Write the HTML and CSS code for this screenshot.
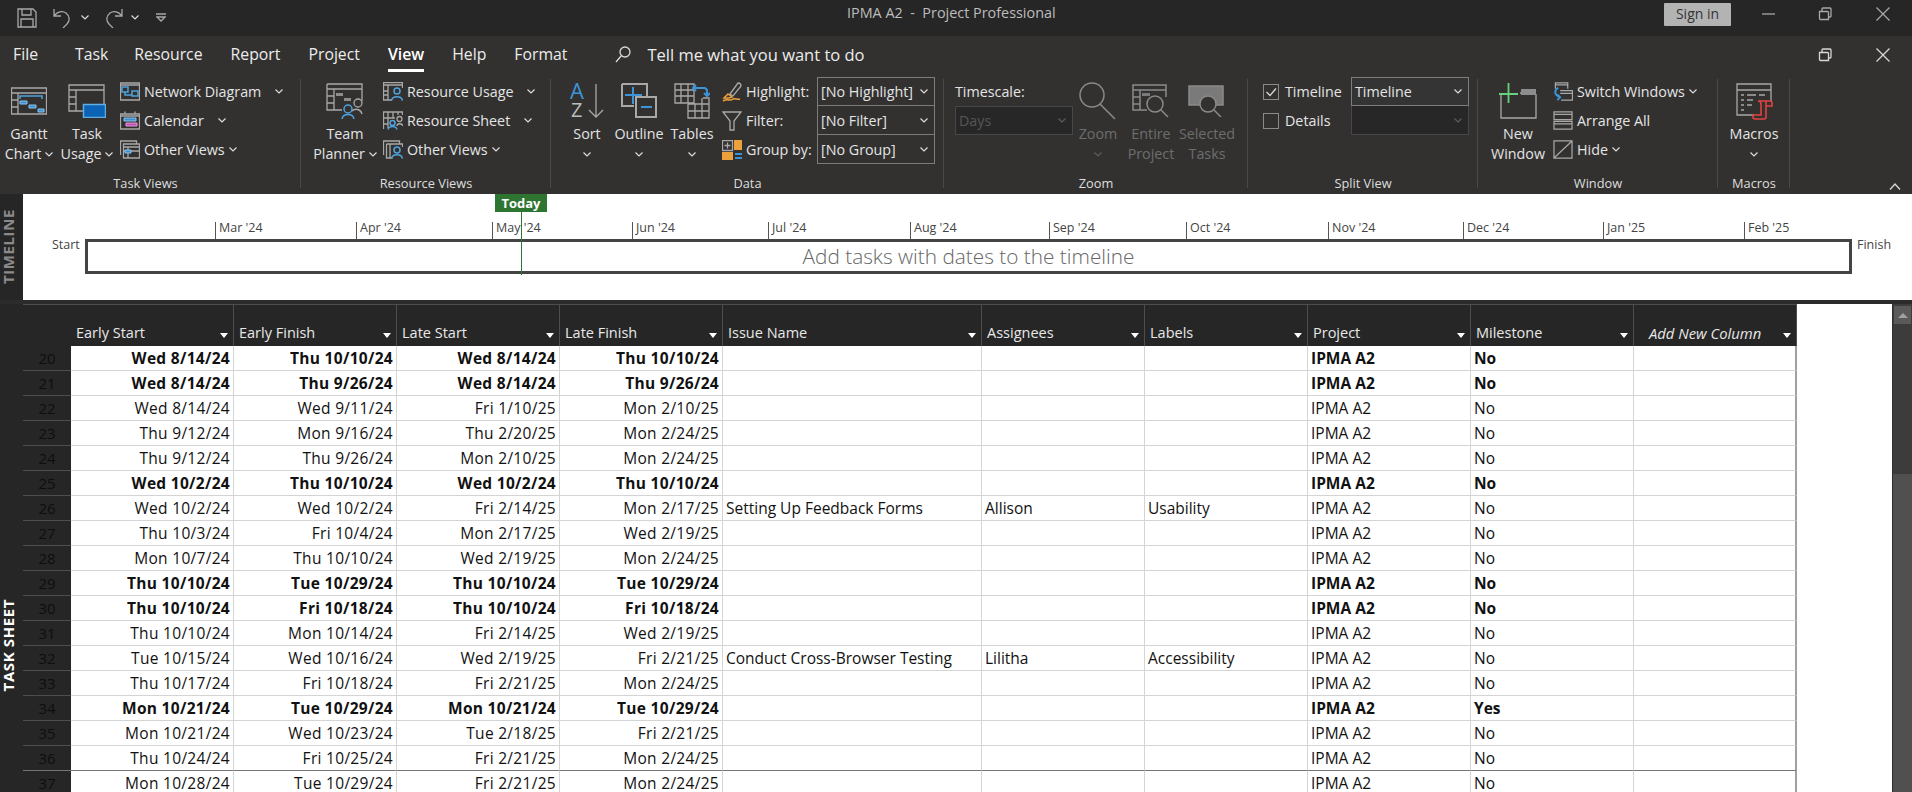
FILE: index.html
```html
<!DOCTYPE html>
<html lang="en">
<head>
<meta charset="utf-8">
<title>IPMA A2 - Project Professional</title>
<link rel="stylesheet" href="styles.css">
</head>
<body>
<div class="app">
  <header class="titlebar">
    <div class="qat">
      <svg class="qi" viewBox="0 0 20 20"><path class="g" d="M1 1h15l3 3v15H1zM5 1v6h9V1M4 19v-8h12v8"/></svg>
      <svg class="qi undo" viewBox="0 0 20 20"><path class="g" d="M1 1v7h7M1 8c3-4 8-6 12-3 4 3 4 8 1 11l-4 4"/></svg>
      <svg class="chev" viewBox="0 0 8 5"><path d="M.5.5 4 4 7.5.5"/></svg>
      <svg class="qi redo" viewBox="0 0 20 20"><path class="g" d="M19 1v7h-7M19 8c-3-4-8-6-12-3-4 3-4 8-1 11l4 4"/></svg>
      <svg class="chev" viewBox="0 0 8 5"><path d="M.5.5 4 4 7.5.5"/></svg>
      <svg class="qc" viewBox="0 0 10 9"><path class="g" d="M0 1h10M1 4l4 4 4-4z"/></svg>
    </div>
    <div class="title">IPMA A2&nbsp; -&nbsp; Project Professional</div>
    <div class="winctl">
      <span class="signin">Sign in</span>
      <svg class="wi wmin" viewBox="0 0 14 14"><path class="g" d="M0 7h13"/></svg>
      <svg class="wi" viewBox="0 0 14 14"><path class="g" d="M1.500 4.500h8a1 1 0 0 1 1 1v7h-8a1 1 0 0 1-1-1zM4 4V2a1 1 0 0 1 1-1h7a1 1 0 0 1 1 1v7a1 1 0 0 1-1 1h-1"/></svg>
      <svg class="wi" viewBox="0 0 14 14"><path class="g" d="M.5.5l13 13M13.500.5l-13 13"/></svg>
    </div>
  </header>

  <nav class="tabs">
    <span class="tab tab-file">File</span>
    <span class="tab tab-task">Task</span>
    <span class="tab">Resource</span>
    <span class="tab">Report</span>
    <span class="tab">Project</span>
    <span class="tab tab-on">View</span>
    <span class="tab">Help</span>
    <span class="tab">Format</span>
    <svg class="search" viewBox="0 0 16 17"><path class="g lt" d="M15 6a5 5 0 1 1-10 0 5 5 0 0 1 10 0zM6.500 9.500 1 16"/></svg>
    <span class="tell">Tell me what you want to do</span>
    <svg class="wi win2" viewBox="0 0 14 14"><path class="g lt" d="M1.500 4.500h8a1 1 0 0 1 1 1v7h-8a1 1 0 0 1-1-1zM4 4V2a1 1 0 0 1 1-1h7a1 1 0 0 1 1 1v7a1 1 0 0 1-1 1h-1"/></svg>
    <svg class="wi win3" viewBox="0 0 14 14"><path class="g lt" d="M.5.5l13 13M13.500.5l-13 13"/></svg>
  </nav>

  <section class="ribbon">
    <div class="group tg1">
      <div class="body">
        <div class="lg w58">
          <div class="ic"><svg width="36" height="28" viewBox="0 0 36 28"><path class="g" d="M.5 1h35v26H.5zM.5 6h35M7 6v21M.5 13h6.500M.5 20h6.500"/><path class="bl" d="M9 12V9h22v3"/><path class="bf" d="M9 14h7v3H9zM18 18h7v3h-7zM27 22h6v3h-6z"/></svg></div>
          <span>Gantt</span><span>Chart<svg class="chev ml4" viewBox="0 0 8 5"><path d="M.5.5 4 4 7.5.5"/></svg></span>
        </div>
        <div class="lg w58">
          <div class="ic"><svg width="38" height="34" viewBox="0 0 38 34"><path class="g" d="M1 1h35v26H1zM1 6h35M8 6v21M1 13h7M1 20h7"/><path class="blue-box" d="M15.500 20.500h22v13h-22z"/></svg></div>
          <span>Task</span><span>Usage<svg class="chev ml4" viewBox="0 0 8 5"><path d="M.5.5 4 4 7.5.5"/></svg></span>
        </div>
        <div class="col ml4">
          <div class="sm"><svg class="si" viewBox="0 0 20 19"><path class="g" d="M.5 1h19v17H.5zM.5 3h19"/><path class="bl" d="M2 5h6v5H2zM12 9h6v5h-6zM5 10v3h7"/></svg><span>Network Diagram</span><svg class="chev ml13" viewBox="0 0 8 5"><path d="M.5.5 4 4 7.500.5"/></svg></div>
          <div class="sm"><svg class="si" viewBox="0 0 20 19"><path class="g" d="M.5 3h19v15H.5zM5 .5v3M15 .5v3M.5 5h19"/><path class="bf" d="M4 7h12v3H4z"/><path class="pk" d="M6 12h11v3H6z"/></svg><span>Calendar</span><svg class="chev ml13" viewBox="0 0 8 5"><path d="M.5.5 4 4 7.500.5"/></svg></div>
          <div class="sm"><svg class="si" viewBox="0 0 20 19"><path class="g" d="M3.500 4h16v14h-16zM3.500 7h16M8 7v11M.5 15V1h16v3M3.500 11h4M8 11h11"/><path class="bf" d="M5 10h6v3H5z"/></svg><span>Other Views</span><svg class="chev ml4" viewBox="0 0 8 5"><path d="M.5.5 4 4 7.500.5"/></svg></div>
        </div>
      </div>
      <div class="label">Task Views</div>
    </div>

    <div class="group tg2">
      <div class="body">
        <div class="lg w70">
          <div class="ic"><svg width="38" height="36" viewBox="0 0 38 36"><path class="g" d="M1 1h35v17M1 1v26h15M1 6h35M8 6v21M1 13h7M1 20h7"/><path class="gf" d="M10 10h7v3h-7zM18 15h7v3h-7z"/><circle class="g" cx="32" cy="20" r="4"/><path class="g" d="M36 31c-1-5-7-6-10-3"/><circle class="bl" cx="22" cy="26" r="4"/><path class="bl" d="M16 36c1-6 11-6 12 0"/></svg></div>
          <span>Team</span><span>Planner<svg class="chev ml4" viewBox="0 0 8 5"><path d="M.5.5 4 4 7.500.5"/></svg></span>
        </div>
        <div class="col ml3">
          <div class="sm"><svg class="si" viewBox="0 0 20 19"><path class="g" d="M9 18H.5V.5h19V6M.5 3h19M5 3v15M.5 9H5M.5 13H5"/><circle class="bl" cx="14" cy="9" r="3"/><path class="bl" d="M8.500 18.500c1-5 10-5 11 0"/></svg><span>Resource Usage</span><svg class="chev ml13" viewBox="0 0 8 5"><path d="M.5.5 4 4 7.500.5"/></svg></div>
          <div class="sm"><svg class="si" viewBox="0 0 20 19"><path class="g" d="M.5 18V1h19v3M.5 7H12M.5 13H5M5 1v16M10 1v6M15 1v3"/><circle class="g" cx="16.500" cy="8" r="2.500"/><path class="g" d="M14 15c0-3 5-3 6 0"/><circle class="bl" cx="9.500" cy="12" r="2.500"/><path class="bl" d="M5 18.500c1-4 8-4 9 0"/></svg><span>Resource Sheet</span><svg class="chev ml13" viewBox="0 0 8 5"><path d="M.5.5 4 4 7.500.5"/></svg></div>
          <div class="sm"><svg class="si" viewBox="0 0 20 19"><path class="g" d="M3.500 4h16v3M3.500 4v14h6M.5 15V1h16v3M7 4v14"/><circle class="bl" cx="14" cy="10" r="3"/><path class="bl" d="M8.500 18.500c1-5 10-5 11 0"/></svg><span>Other Views</span><svg class="chev ml4" viewBox="0 0 8 5"><path d="M.5.5 4 4 7.500.5"/></svg></div>
        </div>
      </div>
      <div class="label">Resource Views</div>
    </div>

    <div class="group tg3">
      <div class="body">
        <div class="lg w44">
          <div class="ic"><svg width="34" height="36" viewBox="0 0 34 36"><text class="az a" x="0" y="16">A</text><text class="az z" x="1" y="34">Z</text><path class="g" d="M26 1v33M19 27l7 7 7-7"/></svg></div>
          <span>Sort</span><span><svg class="chev" viewBox="0 0 8 5"><path d="M.5.5 4 4 7.500.5"/></svg></span>
        </div>
        <div class="lg w60">
          <div class="ic"><svg width="36" height="36" viewBox="0 0 36 36"><path class="thick" d="M1 1h25v12M1 1v22h12"/><path class="bl2" d="M12 4v17M4 12h17"/><path class="thick" d="M15 14h20v20H15z"/><path class="bl2" d="M20 24h11"/></svg></div>
          <span>Outline</span><span><svg class="chev" viewBox="0 0 8 5"><path d="M.5.5 4 4 7.500.5"/></svg></span>
        </div>
        <div class="lg w46">
          <div class="ic"><svg width="36" height="36" viewBox="0 0 36 36"><path class="g" d="M1 1h19v19H1zM1 7h19M1 13h19M7 1v19M14 1v19M14 21v14h21V15h-6M14 28h21M21 21v14M28 15v20M14 21h21"/><path class="bl2" d="M19 5h12l2 2v6M30 10l3 3 3-3M22 2l-3 3 3 3"/></svg></div>
          <span>Tables</span><span><svg class="chev" viewBox="0 0 8 5"><path d="M.5.5 4 4 7.500.5"/></svg></span>
        </div>
        <div class="col ml7">
          <div class="frow"><span class="fl"><svg class="fi" viewBox="0 0 20 20"><path class="g" d="M8 12 16 1c2 0 3 1 3 3l-8 10z"/><path class="or" d="M6 12l4 3-3 1H2zM1 19c5-3 7 1 10-2 2-1 5 1 7 0"/></svg>Highlight:</span><div class="dd"><span>[No Highlight]</span><svg class="chev" viewBox="0 0 8 5"><path d="M.5.5 4 4 7.500.5"/></svg></div></div>
          <div class="frow"><span class="fl"><svg class="fi" viewBox="0 0 20 20"><path class="g" d="M1 1h18l-7 9v9H8v-9z"/></svg>Filter:</span><div class="dd"><span>[No Filter]</span><svg class="chev" viewBox="0 0 8 5"><path d="M.5.5 4 4 7.500.5"/></svg></div></div>
          <div class="frow"><span class="fl"><svg class="fi" viewBox="0 0 20 20"><path class="g" d="M.5.500h10v10H.5zM5.500 2.500v6M2.500 5.500h6"/><path class="orf" d="M12 0h8v10h-8zM0 12h11v8H0z"/><path class="bl2" d="M13 14h7M13 18h7"/></svg>Group by:</span><div class="dd"><span>[No Group]</span><svg class="chev" viewBox="0 0 8 5"><path d="M.5.5 4 4 7.500.5"/></svg></div></div>
        </div>
      </div>
      <div class="label">Data</div>
    </div>

    <div class="group tg4">
      <div class="body">
        <div class="col">
          <div class="frow"><span>Timescale:</span></div>
          <div class="dd dd-off"><span>Days</span><svg class="chev off" viewBox="0 0 8 5"><path d="M.5.5 4 4 7.500.5"/></svg></div>
        </div>
        <div class="lg w50 dis">
          <div class="ic"><svg width="38" height="38" viewBox="0 0 38 38"><path class="d" d="M25 13a12 12 0 1 1-24 0 12 12 0 0 1 24 0zM21 22l15 15"/></svg></div>
          <span>Zoom</span><span><svg class="chev off" viewBox="0 0 8 5"><path d="M.5.5 4 4 7.500.5"/></svg></span>
        </div>
        <div class="lg w56 dis">
          <div class="ic"><svg width="38" height="34" viewBox="0 0 38 34"><path class="d" d="M15 26H1V1h33v12M1 6h33M8 6v20M1 13h7M1 20h7"/><path class="df" d="M10 9h8v3h-8z"/><path class="d" d="M31 20a8 8 0 1 1-16 0 8 8 0 0 1 16 0zM29 26l7 7"/></svg></div>
          <span>Entire</span><span>Project</span>
        </div>
        <div class="lg w56 dis">
          <div class="ic"><svg width="38" height="32" viewBox="0 0 38 32"><path class="df" d="M1 1h34v19H1z"/><path class="d" d="M1 1h34v19H1z"/><path class="dk" d="M28 19a8 8 0 1 1-16 0 8 8 0 0 1 16 0z"/><path class="d" d="M26 25l7 7"/></svg></div>
          <span>Selected</span><span>Tasks</span>
        </div>
      </div>
      <div class="label">Zoom</div>
    </div>

    <div class="group tg5">
      <div class="body">
        <div class="col">
          <div class="frow"><span class="cbl"><span class="cb"><svg viewBox="0 0 12 10"><path class="g lt" d="M1.500 5 5 8.500l6-7"/></svg></span>Timeline</span><div class="dd dd-on"><span>Timeline</span><svg class="chev" viewBox="0 0 8 5"><path d="M.5.5 4 4 7.500.5"/></svg></div></div>
          <div class="frow"><span class="cbl"><span class="cb"></span>Details</span><div class="dd dd-off"><span></span><svg class="chev off" viewBox="0 0 8 5"><path d="M.5.5 4 4 7.500.5"/></svg></div></div>
        </div>
      </div>
      <div class="label">Split View</div>
    </div>

    <div class="group tg6">
      <div class="body">
        <div class="lg w64">
          <div class="ic"><svg width="38" height="36" viewBox="0 0 38 36"><path class="g" d="M2 11v24h35V11M21 10h16"/><path class="gf" d="M22 6h15v6H22z"/><path class="gr" d="M0 11h19M9.500 0v20"/></svg></div>
          <span>New</span><span>Window</span>
        </div>
        <div class="col ml3">
          <div class="sm"><svg class="si" viewBox="0 0 20 20"><path class="g" d="M2 7V1h13v6M2 3h13M7 9h13v10H8M7 12h13"/><path class="bl2" d="M5 6c-5 3-4 8 2 10M4 13l3 3-3 3"/></svg><span>Switch Windows</span><svg class="chev ml4" viewBox="0 0 8 5"><path d="M.5.5 4 4 7.500.5"/></svg></div>
          <div class="sm"><svg class="si" viewBox="0 0 20 20"><path class="g" d="M.5 1h19v8H.5zM.5 11h19v8H.5zM.5 3.500h19M.5 13.500h19"/></svg><span>Arrange All</span></div>
          <div class="sm"><svg class="si" viewBox="0 0 20 20"><path class="g" d="M.5 1h19v18H.5zM.5 19l19-18"/></svg><span>Hide</span><svg class="chev ml4" viewBox="0 0 8 5"><path d="M.5.5 4 4 7.500.5"/></svg></div>
        </div>
      </div>
      <div class="label">Window</div>
    </div>

    <div class="group tg7">
      <div class="body">
        <div class="lg w72">
          <div class="ic"><svg width="37" height="37" viewBox="0 0 37 37"><path class="g" d="M18 32H1V1h34v17M1 7h34"/><path class="g" d="M5 12h3M11 12h9M23 12h6M5 17h3M11 17h6M5 22h3M11 22h5M5 27h3"/><path class="rd" d="M22 18h12a2 2 0 0 1 2 2v3h-6M22 18c2 0 3 1 3 3v11h-8v2a2 2 0 0 0 2 2h9a2 2 0 0 0 2-2V18"/></svg></div>
          <span>Macros</span><span><svg class="chev" viewBox="0 0 8 5"><path d="M.5.5 4 4 7.500.5"/></svg></span>
        </div>
      </div>
      <div class="label">Macros</div>
    </div>
    <svg class="collapse" viewBox="0 0 12 7"><path class="g lt" d="M1 6.500 6 1l5 5.500"/></svg>
  </section>

  <section class="timeline">
    <div class="side side-tl"><span class="vlabel dim">TIMELINE</span></div>
    <div class="canvas">
      <span class="today">Today</span>
      <span class="today-line"></span>
      <span class="edge edge-s">Start</span>
      <span class="edge edge-f">Finish</span>
      <div class="tlbar">Add tasks with dates to the timeline</div>
      <span class="mon" style="left:192px">Mar '24</span>
      <span class="mon" style="left:333px">Apr '24</span>
      <span class="mon" style="left:469px">May '24</span>
      <span class="mon" style="left:609px">Jun '24</span>
      <span class="mon" style="left:745px">Jul '24</span>
      <span class="mon" style="left:887px">Aug '24</span>
      <span class="mon" style="left:1026px">Sep '24</span>
      <span class="mon" style="left:1163px">Oct '24</span>
      <span class="mon" style="left:1305px">Nov '24</span>
      <span class="mon" style="left:1440px">Dec '24</span>
      <span class="mon" style="left:1580px">Jan '25</span>
      <span class="mon" style="left:1721px">Feb '25</span>
    </div>
  </section>

  <section class="sheet">
    <div class="side side-ts"><span class="vlabel">TASK SHEET</span></div>
    <table class="grid">
      <colgroup><col class="c-n"><col class="c-d"><col class="c-d"><col class="c-d"><col class="c-d"><col class="c-i"><col class="c-d"><col class="c-d"><col class="c-d"><col class="c-d"><col class="c-d"></colgroup>
      <thead>
        <tr>
          <th class="n"></th>
          <th><div class="hd">Early Start<i></i></div></th>
          <th><div class="hd">Early Finish<i></i></div></th>
          <th><div class="hd">Late Start<i></i></div></th>
          <th><div class="hd">Late Finish<i></i></div></th>
          <th><div class="hd">Issue Name<i></i></div></th>
          <th><div class="hd">Assignees<i></i></div></th>
          <th><div class="hd">Labels<i></i></div></th>
          <th><div class="hd">Project<i></i></div></th>
          <th><div class="hd">Milestone<i></i></div></th>
          <th><div class="hd hd-new"><em>Add New Column</em><i></i></div></th>
        </tr>
      </thead>
      <tbody>
        <tr class="b"><td class="n">20</td><td class="r">Wed 8/14/24</td><td class="r">Thu 10/10/24</td><td class="r">Wed 8/14/24</td><td class="r">Thu 10/10/24</td><td></td><td></td><td></td><td>IPMA A2</td><td>No</td><td></td></tr>
        <tr class="b"><td class="n">21</td><td class="r">Wed 8/14/24</td><td class="r">Thu 9/26/24</td><td class="r">Wed 8/14/24</td><td class="r">Thu 9/26/24</td><td></td><td></td><td></td><td>IPMA A2</td><td>No</td><td></td></tr>
        <tr><td class="n">22</td><td class="r">Wed 8/14/24</td><td class="r">Wed 9/11/24</td><td class="r">Fri 1/10/25</td><td class="r">Mon 2/10/25</td><td></td><td></td><td></td><td>IPMA A2</td><td>No</td><td></td></tr>
        <tr><td class="n">23</td><td class="r">Thu 9/12/24</td><td class="r">Mon 9/16/24</td><td class="r">Thu 2/20/25</td><td class="r">Mon 2/24/25</td><td></td><td></td><td></td><td>IPMA A2</td><td>No</td><td></td></tr>
        <tr><td class="n">24</td><td class="r">Thu 9/12/24</td><td class="r">Thu 9/26/24</td><td class="r">Mon 2/10/25</td><td class="r">Mon 2/24/25</td><td></td><td></td><td></td><td>IPMA A2</td><td>No</td><td></td></tr>
        <tr class="b"><td class="n">25</td><td class="r">Wed 10/2/24</td><td class="r">Thu 10/10/24</td><td class="r">Wed 10/2/24</td><td class="r">Thu 10/10/24</td><td></td><td></td><td></td><td>IPMA A2</td><td>No</td><td></td></tr>
        <tr><td class="n">26</td><td class="r">Wed 10/2/24</td><td class="r">Wed 10/2/24</td><td class="r">Fri 2/14/25</td><td class="r">Mon 2/17/25</td><td>Setting Up Feedback Forms</td><td>Allison</td><td>Usability</td><td>IPMA A2</td><td>No</td><td></td></tr>
        <tr><td class="n">27</td><td class="r">Thu 10/3/24</td><td class="r">Fri 10/4/24</td><td class="r">Mon 2/17/25</td><td class="r">Wed 2/19/25</td><td></td><td></td><td></td><td>IPMA A2</td><td>No</td><td></td></tr>
        <tr><td class="n">28</td><td class="r">Mon 10/7/24</td><td class="r">Thu 10/10/24</td><td class="r">Wed 2/19/25</td><td class="r">Mon 2/24/25</td><td></td><td></td><td></td><td>IPMA A2</td><td>No</td><td></td></tr>
        <tr class="b"><td class="n">29</td><td class="r">Thu 10/10/24</td><td class="r">Tue 10/29/24</td><td class="r">Thu 10/10/24</td><td class="r">Tue 10/29/24</td><td></td><td></td><td></td><td>IPMA A2</td><td>No</td><td></td></tr>
        <tr class="b"><td class="n">30</td><td class="r">Thu 10/10/24</td><td class="r">Fri 10/18/24</td><td class="r">Thu 10/10/24</td><td class="r">Fri 10/18/24</td><td></td><td></td><td></td><td>IPMA A2</td><td>No</td><td></td></tr>
        <tr><td class="n">31</td><td class="r">Thu 10/10/24</td><td class="r">Mon 10/14/24</td><td class="r">Fri 2/14/25</td><td class="r">Wed 2/19/25</td><td></td><td></td><td></td><td>IPMA A2</td><td>No</td><td></td></tr>
        <tr><td class="n">32</td><td class="r">Tue 10/15/24</td><td class="r">Wed 10/16/24</td><td class="r">Wed 2/19/25</td><td class="r">Fri 2/21/25</td><td>Conduct Cross-Browser Testing</td><td>Lilitha</td><td>Accessibility</td><td>IPMA A2</td><td>No</td><td></td></tr>
        <tr><td class="n">33</td><td class="r">Thu 10/17/24</td><td class="r">Fri 10/18/24</td><td class="r">Fri 2/21/25</td><td class="r">Mon 2/24/25</td><td></td><td></td><td></td><td>IPMA A2</td><td>No</td><td></td></tr>
        <tr class="b"><td class="n">34</td><td class="r">Mon 10/21/24</td><td class="r">Tue 10/29/24</td><td class="r">Mon 10/21/24</td><td class="r">Tue 10/29/24</td><td></td><td></td><td></td><td>IPMA A2</td><td>Yes</td><td></td></tr>
        <tr><td class="n">35</td><td class="r">Mon 10/21/24</td><td class="r">Wed 10/23/24</td><td class="r">Tue 2/18/25</td><td class="r">Fri 2/21/25</td><td></td><td></td><td></td><td>IPMA A2</td><td>No</td><td></td></tr>
        <tr class="pb"><td class="n">36</td><td class="r">Thu 10/24/24</td><td class="r">Fri 10/25/24</td><td class="r">Fri 2/21/25</td><td class="r">Mon 2/24/25</td><td></td><td></td><td></td><td>IPMA A2</td><td>No</td><td></td></tr>
        <tr><td class="n">37</td><td class="r">Mon 10/28/24</td><td class="r">Tue 10/29/24</td><td class="r">Fri 2/21/25</td><td class="r">Mon 2/24/25</td><td></td><td></td><td></td><td>IPMA A2</td><td>No</td><td></td></tr>
      </tbody>
    </table>
    <div class="blank"></div>
    <div class="scroll"><div class="sb-up"><i></i></div><div class="sb-track"></div><div class="sb-thumb"></div></div>
  </section>
</div>
</body>
</html>
```

FILE: styles.css
```css
* { box-sizing: border-box; }
html, body { margin: 0; padding: 0; }
body { font-family: "Open Sans", "Noto Sans", sans-serif; background: #fff; }
.app { width: 1912px; height: 792px; overflow: hidden; display: flex; flex-direction: column; }
svg { display: block; flex: none; }
svg path, svg circle { fill: none; }
.g { stroke: #a8a8a8; stroke-width: 1.3; fill: none; }
.thick { stroke: #a8a8a8; stroke-width: 2; }
svg .lt { stroke: #d8d8d8; }
.bl { stroke: #4ea3dc; stroke-width: 1.5; }
.bl2 { stroke: #3d94d6; stroke-width: 2; }
svg path.bf { fill: #3f8fcf; stroke: #8cc6ee; stroke-width: 1; }
svg path.pk { fill: #c04fb0; stroke: #e59ad8; stroke-width: 1; }
svg path.gf { fill: #8d8d8d; stroke: none; }
svg path.blue-box { fill: #0b63b6; stroke: #62ace4; stroke-width: 1.5; }
.or { stroke: #eda13c; stroke-width: 1.5; }
svg path.orf { fill: #eda13c; stroke: none; }
.gr { stroke: #66d07a; stroke-width: 1.8; }
.rd { stroke: #e2433f; stroke-width: 1.6; }
.d { stroke: #8a8a8a; stroke-width: 1.5; }
svg path.df { fill: #7a7a7a; stroke: none; }
svg path.dk { fill: #323130; stroke: #8a8a8a; stroke-width: 1.5; }
.az { font-size: 22px; font-family: "Open Sans", sans-serif; }
.a { fill: #3d94d6; }
.z { fill: #bcbcbc; font-size: 20px; }

.titlebar { height: 36px; background: #262626; position: relative; display: flex; align-items: flex-start; color: #c2c2c2; flex: none; }
.qat { display: flex; align-items: center; padding: 5px 0 0 17px; height: 30px; }
.qi { width: 20px; height: 20px; }
.undo { margin-left: 16px; }
.redo { margin-left: 14px; }
.qc { width: 10px; height: 9px; margin-left: 17px; }
.chev { width: 8px; height: 5px; }
.chev path { stroke: #dcdcdc; stroke-width: 1.2; }
.qat .chev { margin-left: 8px; }
.chev.off path { stroke: #5c5c5c; }
.title { position: absolute; left: 847px; top: 3px; font-size: 14.4px; line-height: 20px; color: #bdbdbd; white-space: nowrap; }
.winctl { margin-left: auto; display: flex; align-items: flex-start; padding: 3px 0 0 0; height: 30px; }
.signin { width: 67px; height: 23px; background: #b3b3b3; color: #333; font-size: 14px; line-height: 22px; text-align: center; border-radius: 1px; margin-right: 31px; }
.wi { width: 14px; height: 14px; margin-top: 4px; margin-right: 44px; }
.winctl .wi:last-child { margin-right: 22px; }
.wmin { margin-right: 42px; }

.tabs { height: 38px; background: #323130; display: flex; align-items: flex-start; color: #ececec; font-size: 15.8px; flex: none; }
.tab { padding: 9px 14px 0; height: 36px; line-height: 19px; white-space: nowrap; position: relative; }
.tab-file { padding-left: 13px; padding-right: 23px; }
.tab-task { padding-right: 12px; }
.tab-on { font-weight: 600; color: #fff; }
.tab-on::after { content: ""; position: absolute; left: 14px; right: 14px; bottom: 0; height: 3px; background: #fff; }
.search { width: 16px; height: 17px; margin: 10px 0 0 33px; }
.tell { margin-left: 17px; padding-top: 9px; line-height: 19px; font-size: 16.5px; white-space: nowrap; }
.win2 { margin-left: auto; margin-top: 12px; margin-right: 44px; }
.win3 { margin-top: 12px; margin-right: 22px; }

.ribbon { height: 120px; background: #323130; display: flex; align-items: flex-start; color: #e4e4e4; font-size: 14.3px; flex: none; position: relative; }
.group { height: 109px; margin-top: 5px; border-right: 1px solid #4a4948; flex: none; }
.tg1 { width: 301px; }
.tg2 { width: 250px; padding-left: 9px; }
.tg3 { width: 393px; padding-left: 14px; }
.tg4 { width: 304px; padding-left: 11px; }
.tg5 { width: 230px; padding-left: 15px; }
.tg6 { width: 240px; padding-left: 8px; }
.tg7 { width: 72px; }
.body { height: 96px; margin-top: -2px; display: flex; align-items: flex-start; }
.label { height: 20px; line-height: 20px; font-size: 12.8px; text-align: center; color: #dedede; margin-right: -1px; }
.tg1 .label { padding-right: 10px; }
.tg2 .label { margin-left: -9px; }
.tg3 .label { margin-left: -14px; }
.tg4 .label { margin-left: -11px; }
.tg5 .label { margin-left: -15px; }
.tg6 .label { margin-left: -8px; }

.lg { margin-top: 1px; display: flex; flex-direction: column; align-items: center; line-height: 20px; white-space: nowrap; flex: none; }
.lg > span { display: flex; align-items: center; height: 20px; }
.ic { height: 46px; display: flex; align-items: center; justify-content: center; }
.w44 { width: 44px; } .w46 { width: 46px; } .w50 { width: 50px; } .w56 { width: 56px; }
.w58 { width: 58px; } .w60 { width: 60px; } .w64 { width: 64px; } .w70 { width: 70px; } .w72 { width: 72px; }
.dis { color: #6d6d6d; }
.col { display: flex; flex-direction: column; flex: none; }
.ml3 { margin-left: 3px; } .ml4 { margin-left: 4px; } .ml7 { margin-left: 7px; } .ml13 { margin-left: 14px; }
.sm { height: 29px; display: flex; align-items: center; white-space: nowrap; }
.si { width: 20px; height: 19px; margin-right: 4px; }
.frow { height: 29px; display: flex; align-items: center; white-space: nowrap; }
.fl { width: 95px; display: flex; align-items: center; }
.fi { width: 20px; height: 20px; margin-right: 4px; }
.dd { width: 118px; height: 29px; border: 1px solid #7c7c7c; display: flex; align-items: center; justify-content: space-between; padding: 0 6px 0 3px; color: #e4e4e4; flex: none; }
.frow + .frow .dd { border-top-width: 0; }
.dd-off { background: #272727; border-color: #474747; color: #565656; }
.dd-on { background: #343434; }
.cbl { width: 88px; display: flex; align-items: center; }
.cb { width: 16px; height: 16px; border: 1px solid #8a8a8a; margin-right: 6px; display: flex; align-items: center; justify-content: center; }
.cb svg { width: 12px; height: 10px; }
.collapse { position: absolute; right: 11px; bottom: 4px; width: 12px; height: 7px; }

.timeline { height: 106px; display: flex; flex: none; }
.side { width: 23px; background: #262626; flex: none; display: flex; justify-content: flex-start; }
.side-tl { align-items: center; }
.side-ts { align-items: flex-start; padding-top: 295px; }
.vlabel { writing-mode: vertical-rl; transform: rotate(180deg); font-size: 15px; font-weight: 700; letter-spacing: .6px; color: #fff; white-space: nowrap; line-height: 17px; }
.dim { color: #8a8a8a; }
.canvas { flex: 1; position: relative; background: #fff; color: #444; }
.today { position: absolute; left: 472px; top: 0; width: 52px; height: 18px; background: #2e7531; color: #fff; font-size: 13px; font-weight: 700; line-height: 18px; text-align: center; z-index: 2; }
.today-line { position: absolute; left: 498px; top: 18px; width: 1px; height: 63px; background: #2e7531; z-index: 2; }
.edge { position: absolute; top: 41px; font-size: 12.5px; line-height: 20px; color: #444; }
.edge-s { left: 29px; }
.edge-f { left: 1834px; }
.tlbar { position: absolute; left: 62px; top: 45px; width: 1767px; height: 35px; border: 3px solid #444; font-size: 20.8px; font-weight: 300; color: #666; text-align: center; line-height: 28px; }
.mon { position: absolute; top: 28px; height: 17px; padding-left: 3px; border-left: 1px solid #555; font-size: 12.5px; line-height: 12px; color: #444; white-space: nowrap; }

.sheet { flex: 1; display: flex; border-top: 4px solid #2b2b2b; min-height: 0; overflow: hidden; }
.grid { width: 1774px; table-layout: fixed; border-collapse: separate; border-spacing: 0; flex: none; font-size: 15.5px; color: #111; align-self: flex-start; }
.c-n { width: 48px; } .c-d { width: 163px; } .c-i { width: 259px; }
.grid th { height: 42px; background: #262626; color: #e8e8e8; font-weight: 400; border-top: 1px solid #4d4d4d; border-right: 1px solid #4d4d4d; vertical-align: bottom; padding: 0; }
.grid th.n { border-right: 0; }
.hd { display: flex; align-items: center; height: 27px; padding: 0 5px; text-align: left; justify-content: space-between; font-size: 14.5px; line-height: 20px; }
.hd i { width: 0; height: 0; border-left: 4.5px solid transparent; border-right: 4.5px solid transparent; border-top: 5px solid #fff; margin-top: 5px; }
.hd-new { padding-left: 15px; }
.hd-new em { font-size: 14.8px; }
.grid td { height: 25px; background: #fff; border-right: 1px solid #d4d4d4; border-bottom: 1px solid #d4d4d4; padding: 0 3px; white-space: nowrap; line-height: 20px; }
.grid td:last-child { border-right: 2px solid #a0a0a0; }
.grid td.r { text-align: right; letter-spacing: .3px; }
.grid td.n { background: #262626; border-right: 0; border-bottom: 1px solid #4d4d4d; color: #0e0e0e; font-weight: 400; text-align: center; font-size: 15px; letter-spacing: 0; }
.b td { font-weight: 700; }
.grid .pb td { border-bottom-color: #757575; }
.blank { flex: 1; background: #fff; }
.scroll { width: 20px; flex: none; background: #3c3c3c; display: flex; flex-direction: column; border-left: 1px solid #2f2f2f; }
.sb-up { height: 18px; margin: 2px 1px 0; background: #5a5a5a; display: flex; align-items: center; justify-content: center; flex: none; }
.sb-up i { width: 0; height: 0; border-left: 5px solid transparent; border-right: 5px solid transparent; border-bottom: 5px solid #a0a0a0; }
.sb-track { height: 150px; flex: none; }
.sb-thumb { flex: 1; background: #505050; }
```
